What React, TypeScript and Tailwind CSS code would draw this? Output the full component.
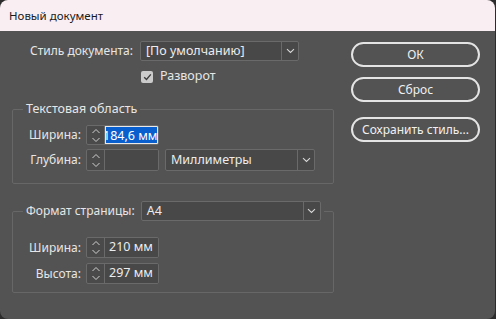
import React from "react";

const font = { fontFamily: '"Segoe UI", "Noto Sans", "Open Sans", sans-serif' };

function Chevron() {
  return (
    <svg width="9" height="6" viewBox="0 0 9 6" fill="none">
      <path d="M1 1.2 L4.5 4.5 L8 1.2" stroke="#d6d6d6" strokeWidth="1.1" />
    </svg>
  );
}

function Stepper() {
  return (
    <div className="w-[18px] h-full flex flex-col items-center justify-center gap-[3px] border-r border-[#6a6a6a]">
      <svg width="10" height="6" viewBox="0 0 10 6" fill="none">
        <path d="M1.5 5 L5 1.5 L8.5 5" stroke="#cfcfcf" strokeWidth="1" />
      </svg>
      <svg width="10" height="6" viewBox="0 0 10 6" fill="none">
        <path d="M1.5 1 L5 4.5 L8.5 1" stroke="#cfcfcf" strokeWidth="1" />
      </svg>
    </div>
  );
}

function Spinner({ value, h, selected }: { value: string; h: string; selected?: boolean }) {
  return (
    <div className={`flex w-[73px] ${h} border border-[#6a6a6a] rounded-[2px] bg-[#4a4a4a] overflow-hidden`}>
      <Stepper />
      {selected ? (
        <div className="flex-1 flex items-center border border-[#e8e8e8] bg-[#2a2a2a] overflow-hidden">
          <span className="bg-[#0a5fcf] text-white text-[12.5px] leading-[17px] pr-[2px] whitespace-nowrap ml-[-3px]">184,6 мм</span>
        </div>
      ) : (
        <div className="flex-1 flex items-center pl-[4px] text-[12.5px] text-[#ececec] bg-[#484848]">{value}</div>
      )}
    </div>
  );
}

function Dropdown({ value, w, h }: { value: string; w: string; h: string }) {
  return (
    <div className={`flex ${w} ${h} border border-[#6a6a6a] rounded-[2px] bg-[#484848]`}>
      <div className="flex-1 flex items-center pl-[5px] text-[12.5px] text-[#ececec] whitespace-nowrap">{value}</div>
      <div className="w-[17px] flex items-center justify-center border-l border-[#6a6a6a]">
        <Chevron />
      </div>
    </div>
  );
}

function Btn({ label, mt }: { label: string; mt: string }) {
  return (
    <div className={`${mt} w-[129px] h-[25px] rounded-full border-2 border-[#e4e4e4] flex items-center justify-center text-[12px] text-[#f0f0f0]`}>
      {label}
    </div>
  );
}

export default function App() {
  return (
    <div className="w-[496px] h-[319px] bg-[#2c2c2c]" style={font}>
      <div className="w-[495px] h-[319px] rounded-[8px] overflow-hidden flex flex-col">
        <div className="h-[31px] bg-[#f9eff3] flex items-center pl-[9px] text-[11.5px] text-[#1b1b1b]">Новый документ</div>
        <div className="flex-1 bg-[#535353] flex text-[#e6e6e6] text-[12px]">
          {/* Left column */}
          <div className="w-[338px] flex flex-col pt-[10px]">
            <div className="flex items-center h-[20px]">
              <span className="w-[133px] text-right">Стиль документа:</span>
              <div className="ml-[7px]">
                <Dropdown value="[По умолчанию]" w="w-[159px]" h="h-[20px]" />
              </div>
            </div>
            <div className="flex items-center mt-[9px] pl-[141px] h-[13px]">
              <div className="w-[12px] h-[12px] rounded-[2px] bg-[#cbcbcb] flex items-center justify-center">
                <svg width="9" height="8" viewBox="0 0 9 8" fill="none">
                  <path d="M1.2 4.2 L3.5 6.4 L7.8 1.4" stroke="#3c3c3c" strokeWidth="1.4" />
                </svg>
              </div>
              <span className="ml-[7px] text-[12.5px]">Разворот</span>
            </div>

            <fieldset className="mt-[18px] ml-[12px] w-[322px] h-[83px] border border-[#676767] rounded-[2px]">
              <legend className="ml-[10px] px-[3px] leading-[16px] text-[12.5px]">Текстовая область</legend>
              <div className="flex items-center mt-[8px]">
                <span className="w-[68px] text-right">Ширина:</span>
                <div className="ml-[5px]">
                  <Spinner value="" h="h-[20px]" selected />
                </div>
              </div>
              <div className="flex items-center mt-[4px]">
                <span className="w-[68px] text-right">Глубина:</span>
                <div className="ml-[5px]">
                  <Spinner value="" h="h-[22px]" />
                </div>
                <div className="ml-[6px]">
                  <Dropdown value="Миллиметры" w="w-[150px]" h="h-[22px]" />
                </div>
              </div>
            </fieldset>

            <fieldset className="mt-[17px] ml-[12px] w-[322px] h-[92px] border border-[#676767] rounded-[2px]">
              <legend className="ml-[10px] pl-[3px] pr-[0px]">
                <div className="flex items-center h-[20px]">
                  <span>Формат страницы:</span>
                  <div className="ml-[6px] bg-[#535353] pr-[3px]">
                    <Dropdown value="А4" w="w-[180px]" h="h-[20px]" />
                  </div>
                </div>
              </legend>
              <div className="flex items-center mt-[16px]">
                <span className="w-[68px] text-right">Ширина:</span>
                <div className="ml-[5px]">
                  <Spinner value="210 мм" h="h-[21px]" />
                </div>
              </div>
              <div className="flex items-center mt-[5px]">
                <span className="w-[68px] text-right">Высота:</span>
                <div className="ml-[5px]">
                  <Spinner value="297 мм" h="h-[21px]" />
                </div>
              </div>
            </fieldset>
          </div>

          {/* Right column */}
          <div className="flex flex-col pl-[13px] pt-[11px]">
            <Btn label="ОК" mt="mt-0" />
            <Btn label="Сброс" mt="mt-[10px]" />
            <Btn label="Сохранить стиль..." mt="mt-[15px]" />
          </div>
        </div>
      </div>
    </div>
  );
}
